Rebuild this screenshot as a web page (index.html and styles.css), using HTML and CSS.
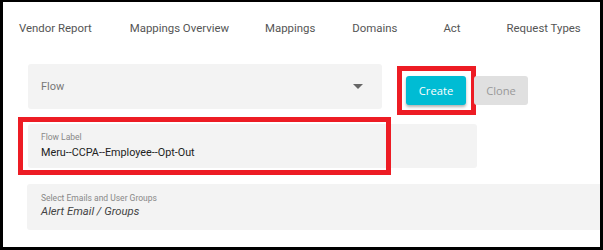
FILE: index.html
```html
<!DOCTYPE html>
<html lang="en">

<head>
    <meta charset="UTF-8">
    <meta name="viewport" content="width=device-width, initial-scale=1.0">
    <title>Flow Settings</title>
    <link rel="stylesheet" href="styles.css">
</head>

<body>
    <div class="frame">
        <nav class="tabs">
            <span class="tab">Vendor Report</span>
            <span class="tab">Mappings Overview</span>
            <span class="tab">Mappings</span>
            <span class="tab">Domains</span>
            <span class="tab">Act</span>
            <span class="tab">Request Types</span>
        </nav>

        <div class="content">
            <div class="row">
                <div class="select">
                    <span>Flow</span>
                    <span class="caret"></span>
                </div>
                <span class="mark">
                    <button class="btn btn-create">Create</button>
                </span>
                <button class="btn btn-clone">Clone</button>
            </div>

            <div class="field field-label">
                <span class="field-title">Flow Label</span>
                <span class="field-value">Meru--CCPA--Employee--Opt-Out</span>
                <div class="highlight"></div>
            </div>

            <div class="field field-wide">
                <span class="field-title">Select Emails and User Groups</span>
                <span class="field-value placeholder">Alert Email / Groups</span>
            </div>
        </div>
    </div>
</body>

</html>
```

FILE: styles.css
```css
body {
    margin: 0;
    background-color: white;
    font-family: Roboto, "Liberation Sans", sans-serif;
}

.frame {
    width: 603px;
    height: 250px;
    box-sizing: border-box;
    border: 3px solid black;
    border-top-width: 2px;
    overflow: hidden;
    position: relative;
}

.tabs {
    display: flex;
    height: 52px;
    align-items: center;
    padding-left: 16px;
    font-size: 11.4px;
    color: #555;
    white-space: nowrap;
}

.tab {
    margin-right: 38px;
}

.tab:nth-child(2) {
    margin-right: 36px;
}

.tab:nth-child(3) {
    margin-right: 37px;
}

.tab:nth-child(4),
.tab:nth-child(5) {
    margin-right: 46px;
}

.content {
    padding-left: 25px;
    padding-top: 10px;
}

.row {
    display: flex;
    align-items: flex-start;
    height: 45px;
}

.select {
    width: 354px;
    height: 45px;
    box-sizing: border-box;
    background-color: #f3f3f3;
    border-radius: 3px;
    padding: 0 13px;
    display: flex;
    align-items: center;
    justify-content: space-between;
    font-size: 11px;
    color: #777;
}

.caret {
    width: 0;
    height: 0;
    border-left: 5px solid transparent;
    border-right: 5px solid transparent;
    border-top: 5px solid #666;
    margin-right: 6px;
}

.mark {
    display: flex;
    margin-left: 15px;
    margin-top: 2px;
    padding: 5px 5px 5px 4px;
    border: 5px solid #ed1c24;
}

.btn {
    height: 29px;
    border: none;
    border-radius: 3px;
    font-family: "Open Sans", sans-serif;
    font-size: 11.2px;
    padding: 0;
}

.btn-create {
    width: 60px;
    background-color: #00bcd4;
    color: white;
    box-shadow: 0 2px 3px rgba(0, 0, 0, 0.3);
}

.btn-clone {
    width: 54px;
    margin-left: -2px;
    margin-top: 12px;
    background-color: #e0e0e0;
    color: #999;
}

.field {
    position: relative;
    background-color: #f3f3f3;
    border-radius: 3px;
    box-sizing: border-box;
    padding: 8px 13px 0;
    display: flex;
    flex-direction: column;
}

.field-label {
    width: 449px;
    height: 44px;
    margin-top: 15px;
}

.field-wide {
    width: 600px;
    height: 46px;
    margin-top: 16px;
    margin-left: -1px;
    padding-top: 9px;
    padding-left: 14px;
}

.field-title {
    font-size: 8.5px;
    color: #888;
}

.field-value {
    font-size: 10.8px;
    color: #222;
    margin-top: 4px;
}

.placeholder {
    font-style: italic;
    color: #444;
    font-size: 11.3px;
    margin-top: 2px;
}

.highlight {
    position: absolute;
    left: -10px;
    top: -7px;
    width: 373px;
    height: 58px;
    box-sizing: border-box;
    border: 5px solid #ed1c24;
}
```
